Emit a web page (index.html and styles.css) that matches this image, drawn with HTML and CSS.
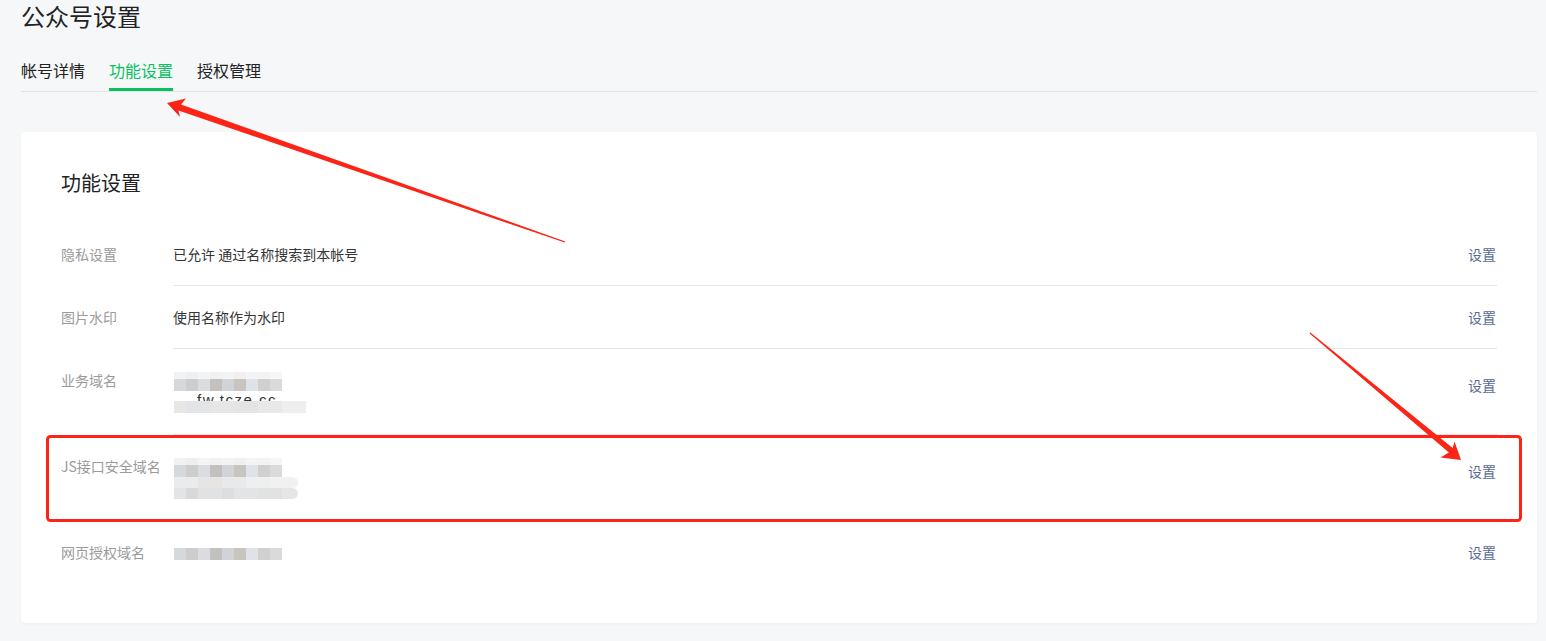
FILE: index.html
```html
<!DOCTYPE html>
<html lang="zh-CN">
<head>
<meta charset="utf-8">
<title>公众号设置</title>
<link rel="stylesheet" href="styles.css">
</head>
<body>
<div class="page">
  <h1 class="title">公众号设置</h1>
  <nav class="tabs">
    <span class="tab">帐号详情</span>
    <span class="tab active">功能设置</span>
    <span class="tab">授权管理</span>
  </nav>
  <section class="card">
    <h2 class="card-title">功能设置</h2>
    <div class="row">
      <div class="label">隐私设置</div>
      <div class="body">
        <div class="value">已允许 通过名称搜索到本帐号</div>
        <a class="link">设置</a>
      </div>
    </div>
    <div class="row">
      <div class="label">图片水印</div>
      <div class="body">
        <div class="value">使用名称作为水印</div>
        <a class="link">设置</a>
      </div>
    </div>
    <div class="row">
      <div class="label">业务域名</div>
      <div class="body multi">
        <div class="value">
          <div class="mask-line"><span class="strip light a"></span><span class="strip dark a"></span></div>
          <div class="mask-line2"><span class="peek">fw.tcze.cc</span><span class="strip light b"></span></div>
        </div>
        <a class="link">设置</a>
      </div>
    </div>
    <div class="row">
      <div class="label">JS接口安全域名</div>
      <div class="body multi">
        <div class="value">
          <div class="mask-line"><span class="strip light a"></span><span class="strip dark a"></span></div>
          <div class="mask-line3"><span class="strip pale c"></span><span class="strip light c"></span></div>
        </div>
        <a class="link">设置</a>
      </div>
    </div>
    <div class="row last">
      <div class="label">网页授权域名</div>
      <div class="body">
        <div class="value"><div class="mask-single"><span class="strip dark a"></span></div></div>
        <a class="link">设置</a>
      </div>
    </div>
  </section>
</div>
<svg class="annot" width="1546" height="641" viewBox="0 0 1546 641" xmlns="http://www.w3.org/2000/svg">
  <polygon fill="#fb2416" points="167,103 186,98.5 181,104.5 565.3,241.4 564.7,242.6 178.5,110.5 180,117"/>
  <polygon fill="#fb2416" points="1461,460 1454.5,441.5 1452.7,447.9 1310.4,332.5 1309.6,333.5 1448.9,452.5 1440.5,457.5"/>
  <rect x="47.5" y="436.5" width="1473" height="84" rx="3" ry="3" fill="none" stroke="#fb2416" stroke-width="3"/>
</svg>
</body>
</html>
```
FILE: styles.css
```css
* { box-sizing: border-box; }
html, body { margin: 0; padding: 0; }
body {
  background: #f6f7f9;
  font-family: "Noto Sans CJK SC", "Noto Sans", sans-serif;
  color: #353535;
  position: relative;
  width: 1546px;
  height: 641px;
  overflow: hidden;
}
.page {
  padding: 0 9px 0 21px;
}
.title {
  margin: 0;
  font-size: 24px;
  font-weight: 400;
  line-height: 32px;
  color: #222;
}
.tabs {
  display: flex;
  gap: 24px;
  margin-top: 26px;
  border-bottom: 1px solid #e2e5e8;
}
.tab {
  font-size: 16px;
  line-height: 24px;
  padding-bottom: 6px;
  border-bottom: 3px solid transparent;
  color: #222;
}
.tab.active {
  color: #07c160;
  border-bottom-color: #07c160;
}
.card {
  margin-top: 40px;
  background: #fff;
  border-radius: 4px;
  box-shadow: 0 1px 3px rgba(0, 0, 0, 0.04);
  padding: 37px 40px 40px;
}
.card-title {
  margin: 0 0 27px;
  font-size: 20px;
  font-weight: 400;
  line-height: 27px;
  color: #222;
}
.row {
  display: flex;
}
.label {
  width: 112px;
  flex: none;
  padding-top: 21px;
  font-size: 14px;
  line-height: 20px;
  color: #9a9a9a;
  white-space: nowrap;
}
.body {
  flex: 1;
  display: flex;
  justify-content: space-between;
  align-items: flex-start;
  padding: 21px 1px 21px 0;
  border-bottom: 1px solid #e7e7e7;
  font-size: 14px;
  line-height: 20px;
}
.row.last .body { border-bottom: none; }
.value { color: #353535; }
.link {
  color: #576b95;
  cursor: pointer;
}
.body.multi .link { margin-top: 5px; }
.mask-line {
  display: flex;
  flex-direction: column;
  padding-top: 2px;
  height: 21px;
}
.mask-single { padding-top: 6px; height: 20px; }
.strip { display: block; height: 12px; }
.strip.light.a { height: 7px; }
.strip.a { width: 108px; margin-left: 1px; }
.strip.dark.a {
  background: linear-gradient(to right,
    #d6d9dc 0 12px, #cdcdcd 12px 24px, #dadcdf 24px 36px, #c3c1bf 36px 48px,
    #d1d3d6 48px 60px, #c8c5c1 60px 72px, #dfe2e6 72px 84px, #d1d0d0 84px 96px, #dadada 96px 108px);
}
.strip.light.a {
  background: linear-gradient(to right,
    #f0f2f3 0 12px, #eef0f0 12px 24px, #f3f4f5 24px 36px, #f1f1f1 36px 48px,
    #f2f3f4 48px 60px, #f0f0f0 60px 72px, #f2f4f6 72px 84px, #f3f3f3 84px 96px, #f6f6f6 96px 108px);
}
.mask-line2 {
  position: relative;
  height: 22px;
  width: 133px;
  overflow: hidden;
}
.peek {
  display: block;
  font-family: "Liberation Sans", sans-serif;
  font-size: 15px;
  letter-spacing: 1.5px;
  line-height: 14px;
  color: #353535;
  padding: 2px 0 0 24px;
  white-space: nowrap;
}
.strip.light.b {
  position: absolute;
  left: 1px;
  top: 10px;
  width: 132px;
  height: 12px;
  background: linear-gradient(to right,
    #e7e8e6 0 12px, #e3e4e7 12px 36px, #e6e6e7 36px 60px, #e4e4e4 60px 84px,
    #e8e8e8 84px 108px, #eeeeee 108px 132px);
}
.mask-line3 {
  display: flex;
  flex-direction: column;
  height: 22px;
}
.strip.c { width: 124px; margin-left: 1px; height: 11px; border-radius: 0 8px 8px 0; }
.strip.pale.c {
  background: linear-gradient(to right,
    #e9ebed 0 24px, #e6e5e4 24px 48px, #e8e9eb 48px 72px, #eeefef 72px 96px, #f1f1f2 96px 124px);
}
.strip.light.c {
  background: linear-gradient(to right,
    #e2e4e7 0 12px, #d9d9d9 12px 24px, #e0e2e4 24px 48px, #dedede 48px 60px,
    #e3e4e6 60px 84px, #e2e2e2 84px 108px, #e6e6e6 108px 124px);
}
.annot {
  position: absolute;
  left: 0;
  top: 0;
  pointer-events: none;
}
```
